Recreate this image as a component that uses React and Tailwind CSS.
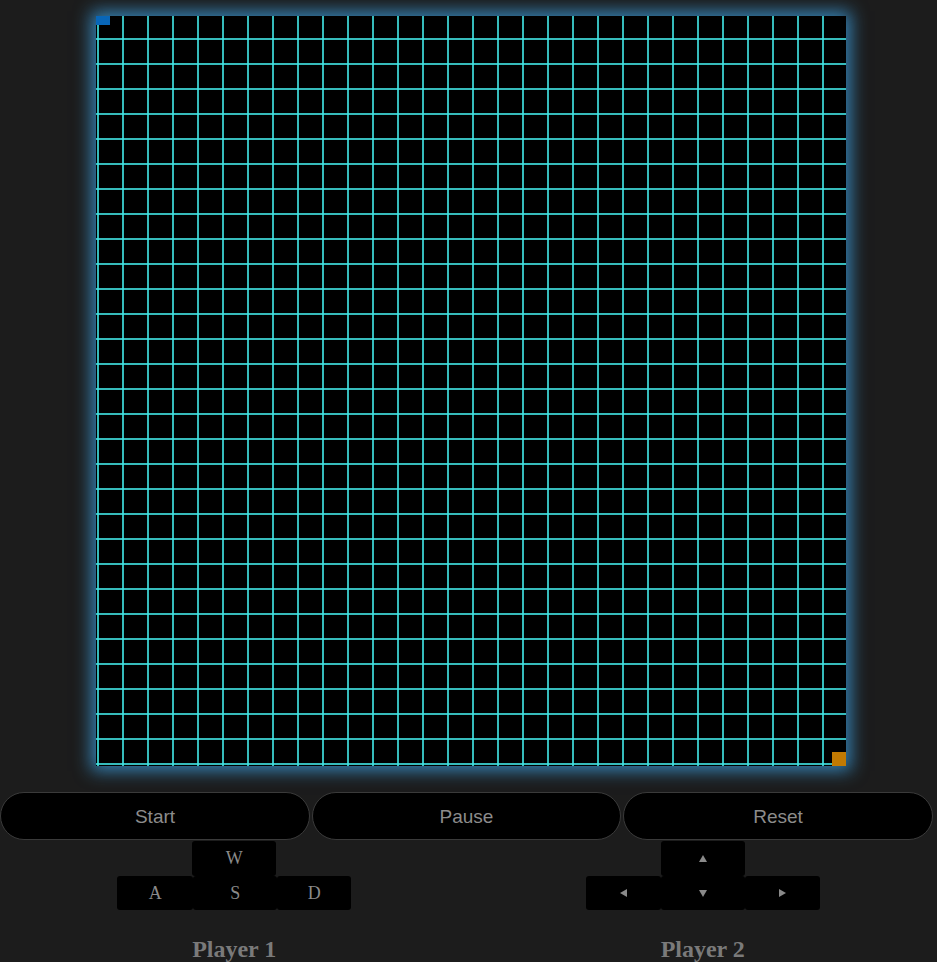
import React from "react";

const serif = { fontFamily: '"Liberation Serif", "Times New Roman", serif' };
const sans = { fontFamily: '"Liberation Sans", Arial, Helvetica, sans-serif' };

function Grid() {
  const v = [];
  for (let k = 0; k < 30; k++) v.push(2 + 25 * k);
  const h = [];
  for (let k = 1; k <= 30; k++) h.push(-2 + 25 * k);
  return (
    <svg width="750" height="750" viewBox="0 0 750 750" className="block">
      <rect x="0" y="0" width="750" height="750" fill="#000" />
      {v.map((x) => (
        <line key={"v" + x} x1={x} y1="0" x2={x} y2="750" stroke="rgba(66,228,228,0.82)" strokeWidth="2" />
      ))}
      {h.map((y) => (
        <line key={"h" + y} x1="0" y1={y} x2="750" y2={y} stroke="rgba(66,228,228,0.82)" strokeWidth="2" />
      ))}
      <rect x="0" y="0" width="14" height="9" fill="#0866b8" />
      <rect x="736" y="736" width="14" height="14" fill="#c27a02" />
    </svg>
  );
}

function Tri({ dir }) {
  const pts = {
    up: "0,7 4,0 8,7",
    down: "0,0 8,0 4,7",
    left: "7,0 7,8 0,4",
    right: "0,0 0,8 7,4",
  }[dir];
  const w = dir === "up" || dir === "down" ? 8 : 7;
  const hh = dir === "up" || dir === "down" ? 7 : 8;
  return (
    <svg width={w} height={hh} viewBox={`0 0 ${w} ${hh}`}>
      <polygon points={pts} fill="#8a8a8a" />
    </svg>
  );
}

function Key({ w, h, children }) {
  return (
    <div
      className={`flex items-center justify-center bg-black rounded-[3px] text-[18px] text-[#8a8a8a] ${w} ${h}`}
      style={serif}
    >
      {children}
    </div>
  );
}

export default function App() {
  return (
    <div className="min-h-[962px] w-full bg-[#1c1c1c] overflow-hidden">
      <div className="flex justify-center pt-4 pl-[5px]">
        <div className="shadow-[0_0_16px_5px_rgba(60,160,225,0.75)]">
          <Grid />
        </div>
      </div>

      <div className="mt-[26px] grid grid-cols-[310px_309px_310px] gap-[2px]" style={sans}>
        {["Start", "Pause", "Reset"].map((t) => (
          <button
            key={t}
            className="h-[48px] pt-[2px] rounded-full bg-black border border-[#3a3a3a] text-[19px] text-[#8c8c8c]"
          >
            {t}
          </button>
        ))}
      </div>

      <div className="grid grid-cols-2 mt-px">
        <div className="flex flex-col items-center">
          <div className="flex flex-col items-center">
            <Key w="w-[84px]" h="h-[35px]">W</Key>
            <div className="flex">
              <Key w="w-[76px]" h="h-[34px]">A</Key>
              <Key w="w-[84px]" h="h-[34px]">S</Key>
              <Key w="w-[74px]" h="h-[34px]">D</Key>
            </div>
          </div>
          <div className="mt-[25px] text-[24px] leading-[28px] font-bold text-[#7a7a7a]" style={serif}>
            Player 1
          </div>
        </div>
        <div className="flex flex-col items-center">
          <div className="flex flex-col items-center">
            <Key w="w-[84px]" h="h-[35px]"><Tri dir="up" /></Key>
            <div className="flex">
              <Key w="w-[75px]" h="h-[34px]"><Tri dir="left" /></Key>
              <Key w="w-[84px]" h="h-[34px]"><Tri dir="down" /></Key>
              <Key w="w-[75px]" h="h-[34px]"><Tri dir="right" /></Key>
            </div>
          </div>
          <div className="mt-[25px] text-[24px] leading-[28px] font-bold text-[#7a7a7a]" style={serif}>
            Player 2
          </div>
        </div>
      </div>
    </div>
  );
}
